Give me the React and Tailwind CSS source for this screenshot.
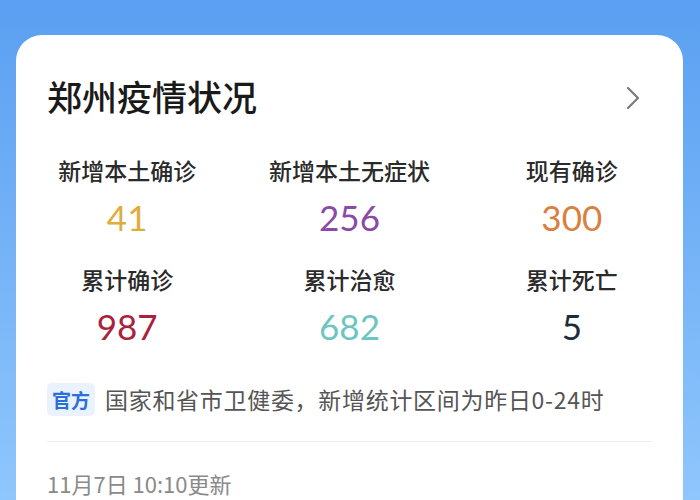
import React from "react";

const stats = [
  { label: "新增本土确诊", value: "41", color: "text-[#e0ac3e]" },
  { label: "新增本土无症状", value: "256", color: "text-[#8a4aa6]" },
  { label: "现有确诊", value: "300", color: "text-[#d98040]" },
  { label: "累计确诊", value: "987", color: "text-[#a8223d]" },
  { label: "累计治愈", value: "682", color: "text-[#6cc6c0]" },
  { label: "累计死亡", value: "5", color: "text-[#1d2b3a]" },
];

const font = "font-['Noto_Sans_CJK_SC','Noto_Sans',sans-serif]";

const App = () => {
  return (
    <div className={`w-[700px] h-[500px] overflow-hidden bg-gradient-to-b from-[#5a9ff1] to-[#8fc6fc] ${font}`}>
      <div className="ml-4 mt-[35px] w-[667px] h-[520px] bg-white rounded-[26px] pt-[40px]">
        <div className="flex items-center justify-between pl-[31px] pr-[42px] h-[42px]">
          <h2 className="text-[35px] leading-[42px] font-medium text-[#1a1a1a]">郑州疫情状况</h2>
          <svg width="16" height="26" viewBox="0 0 16 26" fill="none" className="mt-[3px]">
            <polyline points="3,3 13,13 3,23" stroke="#7a7a7a" strokeWidth="2.2" strokeLinecap="round" strokeLinejoin="round" />
          </svg>
        </div>

        <div className="grid grid-cols-3 gap-y-[27px] mt-[38px]">
          {stats.map((s) => (
            <div key={s.label} className="flex flex-col items-center">
              <p className="text-[23px] leading-[30px] font-medium text-[#2a2a2a]">{s.label}</p>
              <p className={`mt-[12px] text-[35px] leading-[40px] font-['Lato',sans-serif] ${s.color}`}>{s.value}</p>
            </div>
          ))}
        </div>

        <div className="flex items-center mt-[37px] px-[31px]">
          <span className="bg-[#e9f2fd] text-[#2b6fd8] text-[19px] font-bold leading-[33px] px-[5px] rounded-[5px]">官方</span>
          <span className="ml-[10px] text-[23px] tracking-[0.7px] text-[#555555] leading-[33px]">国家和省市卫健委，新增统计区间为昨日0-24时</span>
        </div>

        <div className="mx-[31px] mt-[25px] border-t border-[#efefef]" />

        <p className="px-[31px] mt-[26px] text-[22px] leading-[30px] text-[#8a8a8a]">11月7日 10:10更新</p>
      </div>
    </div>
  );
};

export default App;
